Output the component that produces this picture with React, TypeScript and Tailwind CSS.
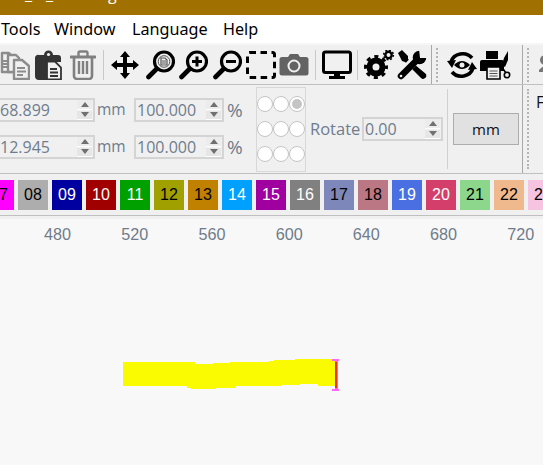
import React from "react";

const Ic = ({ w = 30, mr = 0, ml = 0, children }: { w?: number; mr?: number; ml?: number; children: React.ReactNode }) => (
  <svg width={w} height={30} viewBox={`0 0 ${w} 30`} className="shrink-0" style={{ marginRight: mr, marginLeft: ml }}>
    {children}
  </svg>
);

const Mag = ({ children }: { children?: React.ReactNode }) => (
  <g fill="none" stroke="#000">
    <circle cx="19" cy="11.5" r="9.5" strokeWidth="3.2" fill="#f0f0f0" />
    <path d="M11.5 19 L3.5 27" strokeWidth="4.6" strokeLinecap="round" />
    {children}
  </g>
);

const Sep = ({ h = "h-[30px]" }: { h?: string }) => <div className={`w-px ${h} bg-[#c8c8c8] shrink-0`} />;

const Grip = ({ h }: { h: string }) => (
  <div className={`w-[3px] ${h} shrink-0 border-l-2 border-dotted border-[#b4b4b4]`} />
);

const Spin = () => (
  <div className="ml-auto mr-[1px] flex flex-col gap-px w-[15px] h-[20px] shrink-0">
    <div className="flex-1 bg-[#ececec] border-b border-white flex items-center justify-center">
      <div className="w-0 h-0 border-x-[4px] border-x-transparent border-b-[5px] border-b-[#707070]" />
    </div>
    <div className="flex-1 bg-[#e6e6e6] border-b border-white flex items-center justify-center">
      <div className="w-0 h-0 border-x-[4px] border-x-transparent border-t-[5px] border-t-[#707070]" />
    </div>
  </div>
);

const Field = ({ v, w, extra = "" }: { v: string; w: string; extra?: string }) => (
  <div className={`${w} ${extra} h-[24px] shrink-0 flex items-center border-2 border-[#d4d4d4] bg-[#f0f0f0] pl-[1px] text-[16px] leading-none text-[#6f7c8d]`}>
    <span>{v}</span>
    <Spin />
  </div>
);

const Radio = ({ on }: { on?: boolean }) => (
  <div className="w-[16px] h-[16px] rounded-full border border-[#c4c4c4] bg-white flex items-center justify-center">
    {on && <div className="w-[10px] h-[10px] rounded-full bg-[#c4c4c4]" />}
  </div>
);

const swatches: [string, string, string][] = [
  ["07", "#ff00ff", "#000"],
  ["08", "#adadad", "#000"],
  ["09", "#0000a0", "#fff"],
  ["10", "#a00000", "#fff"],
  ["11", "#00a000", "#fff"],
  ["12", "#a0a000", "#000"],
  ["13", "#c08000", "#000"],
  ["14", "#00a0ff", "#fff"],
  ["15", "#a000a0", "#fff"],
  ["16", "#808080", "#fff"],
  ["17", "#7d87b9", "#000"],
  ["18", "#bb7784", "#000"],
  ["19", "#4a6fe3", "#fff"],
  ["20", "#d33f6a", "#fff"],
  ["21", "#8cd78c", "#000"],
  ["22", "#f0b98d", "#000"],
  ["23", "#f6c4e1", "#000"],
];

const Row = ({ v }: { v: string }) => (
  <div className="flex items-center h-[24px]">
    <Field v={v} w="w-[98px]" extra="-ml-[3px]" />
    <span className="ml-[2px] w-[37px] shrink-0 text-[15.5px] text-[#6f7c8d]">mm</span>
    <Field v="100.000" w="w-[90px]" />
    <span className="ml-[3px] text-[19px] leading-none text-[#6f7c8d]">%</span>
  </div>
);

export default function App() {
  return (
    <div className="w-[543px] h-[465px] overflow-hidden bg-[#f8f8f8] flex flex-col font-['Open_Sans','Noto_Sans',sans-serif]">
      {/* title */}
      <div className="h-[15px] bg-[#a07000] shrink-0 overflow-hidden flex text-white text-[16px] leading-[16px]">
        <span className="ml-[25px] -mt-[14px]">_</span>
        <span className="ml-[14px] -mt-[14px]">_</span>
        <span className="ml-[55px] -mt-[14px]">g</span>
      </div>
      {/* menu */}
      <div className="h-[28px] bg-white shrink-0 flex items-center text-[16.2px] text-[#000] font-['Noto_Sans',sans-serif]">
        <span className="w-[54px] pl-px shrink-0">Tools</span>
        <span className="w-[78px] shrink-0">Window</span>
        <span className="w-[91px] shrink-0">Language</span>
        <span>Help</span>
      </div>
      {/* toolbar */}
      <div className="h-[42px] shrink-0 bg-[#f0f0f0] border-t-2 border-t-[#f6f6f6] border-b border-b-[#c0c0c0] flex items-center">
        <Ic w={30} mr={5}>
          <g fill="#f0f0f0" stroke="#8c8c8c" strokeWidth="2.4" strokeLinejoin="round">
            <path d="M2 3 h7 l3 3 v16 h-10 z" />
            <path d="M8 5 h8 l3 3 v14 h-11 z" />
            <path d="M14 10 h8 l7 6 v13 h-15 z" />
          </g>
          <path d="M3 11h6M3 14h6M3 17h6M17 18h8M17 21.5h9M17 25h6" stroke="#8c8c8c" strokeWidth="1.8" />
        </Ic>
        <Ic w={27} mr={8}>
          <path d="M4 5 h5 a4.5 4.5 0 0 1 9 0 h5 a3 3 0 0 1 3 3 v4 h-11 v18 h-11 a4 4 0 0 1-4-4 v-18 a3 3 0 0 1 4-3z" fill="#333" />
          <rect x="6" y="5" width="15" height="4" rx="1" fill="#333" />
          <circle cx="13.5" cy="4.5" r="1.6" fill="#f0f0f0" />
          <path d="M12 11.5 h8 l6 6 v12 h-14 z" fill="#f0f0f0" stroke="#333" strokeWidth="1.8" />
          <path d="M15 19h7M15 22.5h8M15 26h8" stroke="#333" strokeWidth="1.8" />
        </Ic>
        <Ic w={26} mr={7}>
          <path d="M1 7h24" stroke="#808080" strokeWidth="3" strokeLinecap="round" />
          <path d="M8.5 6 V3 a1.5 1.5 0 0 1 1.5-1.5 h6 a1.5 1.5 0 0 1 1.5 1.5 V6" fill="none" stroke="#808080" strokeWidth="2.4" />
          <path d="M4 8 V26 a3 3 0 0 0 3 3 h12 a3 3 0 0 0 3-3 V8" fill="none" stroke="#808080" strokeWidth="2.6" />
          <path d="M9 11v13M13 11v13M17 11v13" stroke="#808080" strokeWidth="2.4" />
        </Ic>
        <Sep />
        <Ic w={30} ml={6} mr={5}>
          <path d="M15 1 L20 7 H17 V13 H23 V10 L29 15 L23 20 V17 H17 V23 H20 L15 29 L10 23 H13 V17 H7 V20 L1 15 L7 10 V13 H13 V7 H10 Z" fill="#000" />
        </Ic>
        <Ic w={30} mr={3}>
          <Mag>
            <circle cx="19" cy="11.5" r="5.8" fill="none" stroke="#555" strokeWidth="1" />
            <path d="M16 8 h4 l2 2 v5 h-6 z" fill="none" stroke="#555" strokeWidth="1.2" />
            <path d="M17 11h4M17 13h4" stroke="#555" strokeWidth="1" />
          </Mag>
        </Ic>
        <Ic w={30} mr={4}>
          <Mag>
            <path d="M14 11.5h10M19 6.5v10" strokeWidth="3" />
          </Mag>
        </Ic>
        <Ic w={30} mr={2}>
          <Mag>
            <path d="M14 11.5h10" strokeWidth="3" />
          </Mag>
        </Ic>
        <Ic w={32} mr={3}>
          <rect x="3.5" y="2.5" width="27" height="25" rx="2" fill="none" stroke="#000" strokeWidth="3" strokeDasharray="6.5 4.5" />
        </Ic>
        <Ic w={30} mr={6}>
          <path d="M3 7 h6 l2-3 h8 l2 3 h6 a2.5 2.5 0 0 1 2.5 2.5 V23 a2.5 2.5 0 0 1-2.5 2.5 H3 A2.5 2.5 0 0 1 .5 23 V9.5 A2.5 2.5 0 0 1 3 7z" fill="#636363" />
          <circle cx="15" cy="16" r="5.5" fill="none" stroke="#f0f0f0" strokeWidth="2" />
        </Ic>
        <Sep />
        <Ic w={30} ml={6} mr={5}>
          <rect x="1.5" y="2" width="27" height="20.5" rx="2" fill="none" stroke="#000" strokeWidth="3" />
          <path d="M12 23h6v3h-6zM7 26h16v3H7z" fill="#000" />
        </Ic>
        <Sep />
        <Ic w={32} ml={5} mr={2}>
          <circle cx="13" cy="17" r="6.5" fill="none" stroke="#000" strokeWidth="6" />
          <circle cx="13" cy="17" r="10.5" fill="none" stroke="#000" strokeWidth="3" strokeDasharray="4.12 4.12" strokeDashoffset="2" />
          <circle cx="25.5" cy="5" r="3.2" fill="none" stroke="#000" strokeWidth="2.4" />
          <circle cx="25.5" cy="5" r="4.8" fill="none" stroke="#000" strokeWidth="1.6" strokeDasharray="1.88 1.88" />
        </Ic>
        <Ic w={31} mr={3}>
          <path d="M1 3 L5 0 L11 6 L11 9 L29 24 Q30 27 28 28 Q26 30 24 28 L8 12 L5 11 Z" fill="#000" />
          <path d="M8 20 L19 9" stroke="#f0f0f0" strokeWidth="9" />
          <path d="M4 26 L19 11" stroke="#000" strokeWidth="6.5" strokeLinecap="round" />
          <circle cx="22.5" cy="7.5" r="6.8" fill="#000" />
          <path d="M23 8 L22 -1 L32 -1 L32 8z" fill="#f0f0f0" />
          <circle cx="4" cy="26" r="1.3" fill="#f0f0f0" />
        </Ic>
        <div className="w-px h-full bg-[#a8a8a8] shrink-0" />
        <div className="ml-[4px] mr-[8px] flex items-center">
          <Grip h="h-[34px]" />
        </div>
        <Ic w={30} mr={3}>
          <path d="M4 12 a12 11 0 0 1 21-4" fill="none" stroke="#000" strokeWidth="3.6" />
          <path d="M26 18 a12 11 0 0 1-21 4" fill="none" stroke="#000" strokeWidth="3.6" />
          <path d="M0 11 L9 10 L5 18z" fill="#000" />
          <path d="M30 19 L21 20 L25 12z" fill="#000" />
          <path d="M7 15 Q15 7 23 15 Q15 23 7 15z" fill="#000" />
          <circle cx="15" cy="15" r="2.5" fill="#f0f0f0" />
        </Ic>
        <Ic w={31} mr={11}>
          <path d="M6 1h12v8H6z" fill="#000" />
          <path d="M2 10h20a2 2 0 0 1 2 2v9H0v-9a2 2 0 0 1 2-2z" fill="#000" />
          <path d="M7 17h13v12H7z" fill="#f0f0f0" stroke="#000" strokeWidth="1.6" />
          <path d="M9.5 21h8M9.5 23.5h8M9.5 26h8" stroke="#555" strokeWidth="1.2" />
          <path d="M28 1 L24 8 L22 15 L25 17 L28 10z" fill="#000" />
          <circle cx="27" cy="25" r="2.7" fill="none" stroke="#000" strokeWidth="1.6" />
          <path d="M21 16 L26 23" stroke="#000" strokeWidth="1.6" />
        </Ic>
        <div className="w-px h-full bg-[#a8a8a8] shrink-0" />
        <div className="ml-[4px] mr-[7px] flex items-center">
          <Grip h="h-[34px]" />
        </div>
        <Ic w={12}>
          <circle cx="8" cy="10" r="5" fill="#777" />
          <path d="M2 20 Q8 14 12 16 V22 H2z" fill="#777" />
        </Ic>
      </div>
      {/* properties */}
      <div className="h-[89px] shrink-0 bg-[#f0f0f0] border-b border-b-[#c0c0c0] flex items-center">
        <div className="flex flex-col gap-[13px] w-[256px] shrink-0 self-start mt-[13px]">
          <Row v="68.899" />
          <Row v="12.945" />
        </div>
        <div className="w-[50px] h-[85px] shrink-0 border border-[#d8d8d8] grid grid-cols-[16px_16px_16px] auto-rows-[25px] content-center items-center justify-center">
          <Radio />
          <Radio />
          <Radio on />
          <Radio />
          <Radio />
          <Radio />
          <Radio />
          <Radio />
          <Radio />
        </div>
        <span className="ml-[4px] w-[52px] shrink-0 text-[16.5px] text-[#6f7c8d]">Rotate</span>
        <Field v="0.00" w="w-[81px]" />
        <div className="ml-[4px] w-px h-[80px] bg-[#d0d0d0] shrink-0" />
        <div className="ml-[5px] w-[66px] h-[32px] shrink-0 bg-[#e1e1e1] border border-[#adadad] flex items-center justify-center text-[15px] text-[#111]">
          mm
        </div>
        <div className="ml-[3px] w-px h-full bg-[#a8a8a8] shrink-0" />
        <div className="ml-[4px] mr-[6px] flex items-center">
          <Grip h="h-[80px]" />
        </div>
        <span className="self-start mt-[5px] text-[16px] text-[#111]">F</span>
      </div>
      {/* swatches */}
      <div className="h-[42px] shrink-0 bg-[#f0f0f0] border-b border-b-[#c0c0c0] flex items-center gap-[4px] -ml-[16px] font-['Liberation_Sans',sans-serif]">
        {swatches.map(([n, bg, fg]) => (
          <div
            key={n}
            className="w-[30px] h-[30px] shrink-0 flex items-center justify-center text-[16px]"
            style={{ background: bg, color: fg }}
          >
            {n}
          </div>
        ))}
      </div>
      {/* canvas */}
      <div className="relative flex-1 bg-[#f8f8f8] border-t-[3px] border-t-[#f0f0f0]">
        <div className="flex pt-[5px] pl-[19px] text-[16.2px] leading-[20px] text-[#707c8a] font-['Liberation_Sans',sans-serif]">
          {["480", "520", "560", "600", "640", "680", "720"].map((t) => (
            <span key={t} className="w-[77.2px] shrink-0 text-center">
              {t}
            </span>
          ))}
        </div>
        <svg className="absolute left-[120px] top-[136px]" width={222} height={40} viewBox="120 355 222 40">
          <path
            d="M123 362H195V364H213V363H230V362H269V361H274V360H295V359H335V386H318V384H300V385H281V386H236V388H216V389H191V388H187V386H123Z"
            fill="#fbfb00"
          />
          <path d="M332 360H339M332 390H339" stroke="#ff66ff" strokeWidth="2" />
          <path d="M336.5 360V390" stroke="#ff60e0" strokeWidth="3" />
          <path d="M336 362V388" stroke="#f03010" strokeWidth="2" />
        </svg>
      </div>
    </div>
  );
}
